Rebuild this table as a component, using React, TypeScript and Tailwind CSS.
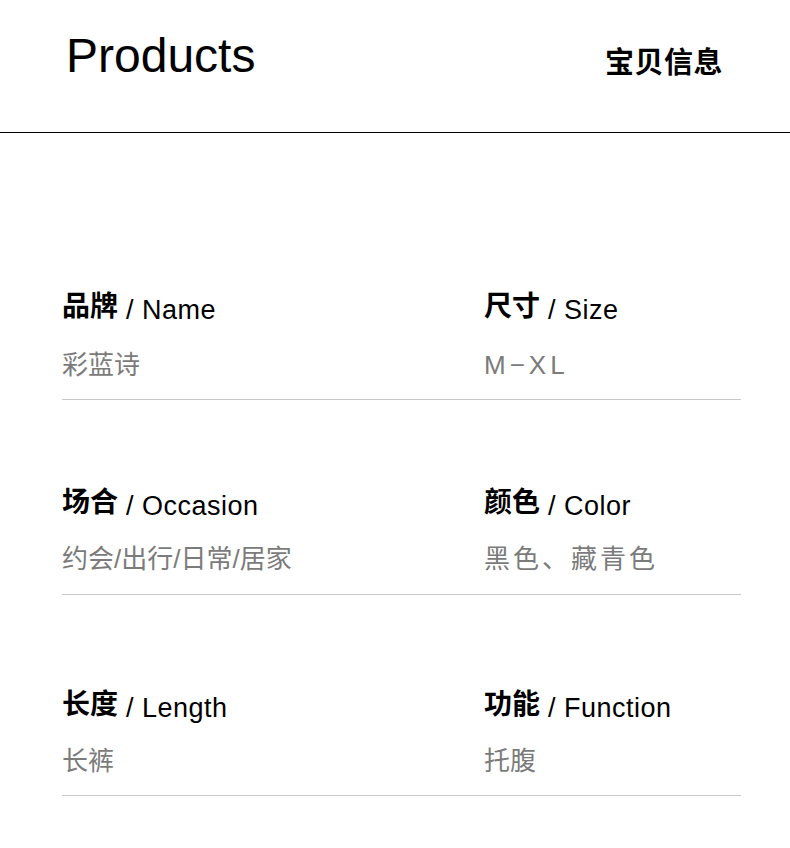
type Cell = { zh: string; en: string; value: string; track?: string };

const specs = [
  {
    left: { zh: "品牌", en: "Name", value: "彩蓝诗" },
    right: { zh: "尺寸", en: "Size", value: "M−XL", track: "tracking-[4px]" },
    row: "mt-[159px] pb-[19px]",
    valueGap: "mt-[28px]",
  },
  {
    left: { zh: "场合", en: "Occasion", value: "约会/出行/日常/居家" },
    right: { zh: "颜色", en: "Color", value: "黑色、藏青色", track: "tracking-[3px]" },
    row: "mt-[88px] pb-[20px]",
    valueGap: "mt-[26px]",
  },
  {
    left: { zh: "长度", en: "Length", value: "长裤" },
    right: { zh: "功能", en: "Function", value: "托腹" },
    row: "mt-[95px] pb-[19px]",
    valueGap: "mt-[26px]",
  },
];

function SpecCell({ cell, valueGap }: { cell: Cell; valueGap: string }) {
  return (
    <div>
      <p className="h-[30px] leading-[30px] whitespace-nowrap text-black">
        <span className="text-[28px] font-bold">{cell.zh}</span>
        <span className="text-[27px] tracking-[0.5px] align-[-3px]"> / {cell.en}</span>
      </p>
      <p className={`${valueGap} ${cell.track ?? ""} h-[30px] leading-[30px] text-[26px] text-[#7b7b7b]`}>
        {cell.value}
      </p>
    </div>
  );
}

export default function App() {
  return (
    <div className="w-[790px] h-[848px] bg-white font-['Liberation_Sans','Noto_Sans_CJK_SC',sans-serif]">
      {/* ── Header ─────────────────────────────────────────── */}
      <header className="h-[133px] border-b border-black flex items-start justify-between pl-[66px] pr-[67px]">
        <h1 className="mt-[32px] text-[48px] leading-none text-black">Products</h1>
        <p className="mt-[47px] text-[29px] leading-[32px] font-bold tracking-[0.5px] text-black">宝贝信息</p>
      </header>

      {/* ── Spec rows ──────────────────────────────────────── */}
      <div className="pl-[62px] pr-[49px]">
        {specs.map((r) => (
          <div key={r.left.en} className={`${r.row} grid grid-cols-[422px_1fr] border-b border-[#c9c9c9]`}>
            <SpecCell cell={r.left} valueGap={r.valueGap} />
            <SpecCell cell={r.right} valueGap={r.valueGap} />
          </div>
        ))}
      </div>
    </div>
  );
}
